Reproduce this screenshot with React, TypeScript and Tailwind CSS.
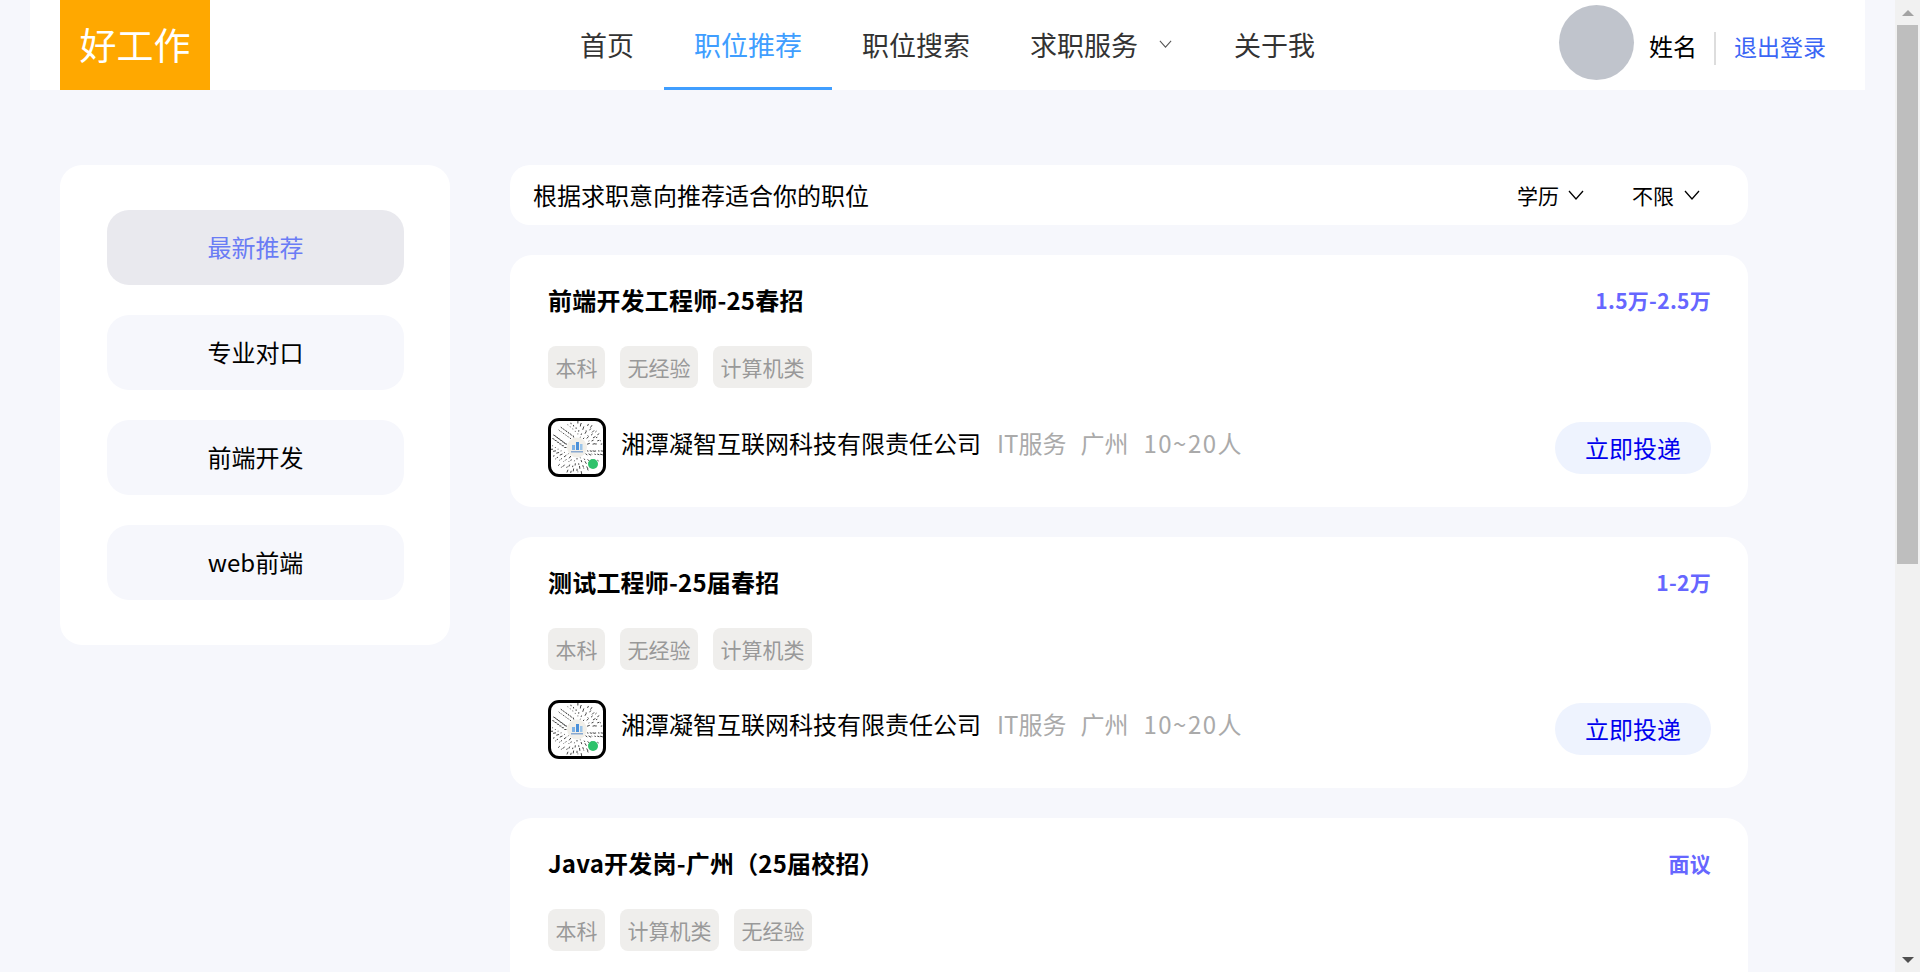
import React from 'react';

const font = { fontFamily: '"Noto Sans CJK SC", "Noto Sans", sans-serif' };

const jobs = [
  { title: '前端开发工程师-25春招', salary: '1.5万-2.5万', tags: ['本科', '无经验', '计算机类'] },
  { title: '测试工程师-25届春招', salary: '1-2万', tags: ['本科', '无经验', '计算机类'] },
  { title: 'Java开发岗-广州（25届校招）', salary: '面议', tags: ['本科', '计算机类', '无经验'] },
];

const sideItems = ['最新推荐', '专业对口', '前端开发', 'web前端'];

const Chevron: React.FC<{ className?: string }> = ({ className }) => (
  <svg viewBox="0 0 16 10" className={className} fill="none" stroke="currentColor" strokeWidth="1.3">
    <polyline points="1,1 8,9 15,1" />
  </svg>
);

// small mini-program style code, drawn with rings of dashes
const MiniCode: React.FC = () => {
  const marks: React.ReactNode[] = [];
  for (let ring = 0; ring < 6; ring++) {
    const r = 10.5 + ring * 2.7;
    const count = 20 + ring * 5;
    for (let i = 0; i < count; i++) {
      if ((i * 7 + ring * 3) % 3 === 0) continue;
      const a = (i / count) * Math.PI * 2;
      const len = 0.8 + ((i * 13 + ring) % 4) * 0.7;
      marks.push(
        <line
          key={`${ring}-${i}`}
          x1={26 + Math.cos(a) * r}
          y1={26.5 + Math.sin(a) * r}
          x2={26 + Math.cos(a) * (r + len)}
          y2={26.5 + Math.sin(a) * (r + len)}
          stroke="#444"
          strokeWidth="1"
        />
      );
    }
  }
  return (
    <div className="w-[58px] h-[59px] border-[3px] border-black rounded-[11px] bg-white overflow-hidden shrink-0">
      <svg viewBox="0 0 52 53" className="w-full h-full">
        {marks}
        <circle cx="26" cy="26.5" r="10" fill="#f1efe9" />
        <rect x="21" y="24" width="3" height="5" fill="#7fb2e5" />
        <rect x="25" y="21" width="3" height="8" fill="#4a90d9" />
        <rect x="29" y="23" width="2.5" height="6" fill="#9cc5ea" />
        <rect x="20" y="30" width="12" height="1.5" fill="#8aa9d0" />
        <circle cx="42" cy="43" r="5" fill="#2fc26b" />
      </svg>
    </div>
  );
};

const JobCard: React.FC<{ job: (typeof jobs)[number] }> = ({ job }) => (
  <div className="h-[251.5px] shrink-0 bg-white rounded-[22px] pl-[38px] pr-[37px] pt-[29px]">
    <div className="flex justify-between items-center h-[32px]">
      <h3 className="text-[24px] leading-[32px] font-bold text-black tracking-[0.2px]">{job.title}</h3>
      <span className="text-[21px] leading-[32px] font-bold text-[#6666ff] tracking-[0.3px]">{job.salary}</span>
    </div>
    <div className="flex gap-[15px] mt-[30px]">
      {job.tags.map((t) => (
        <span key={t} className="h-[42px] px-[7.5px] rounded-lg bg-[#efeeec] text-[#999] text-[21px] leading-[42px]">
          {t}
        </span>
      ))}
    </div>
    <div className="flex items-center mt-[30px]">
      <MiniCode />
      <div className="flex items-center gap-[15px] ml-[15px] text-[24px] leading-[32px] -translate-y-[5px]">
        <span className="text-black mr-[1px]">湘潭凝智互联网科技有限责任公司</span>
        <span className="text-[#aaa] -mr-[1px]">IT服务</span>
        <span className="text-[#aaa]">广州</span>
        <span className="text-[#aaa] tracking-[1.5px]">10~20人</span>
      </div>
      <button className="ml-auto w-[156px] h-[52px] rounded-[26px] bg-[#eef3fe] text-[#0000ee] text-[24px]">立即投递</button>
    </div>
  </div>
);

const App: React.FC = () => {
  return (
    <div className="flex h-[972px] overflow-hidden bg-[#f6f7fc]" style={font}>
      <div className="flex-1 min-w-0">
        {/* Header */}
        <header className="mx-[30px] h-[90px] bg-white flex pl-[30px] pr-[39px]">
          <div className="w-[150px] h-[90px] bg-[#ffa800] text-white text-[37px] leading-[88px] text-center">好工作</div>
          <nav className="flex ml-[340px] text-[27px] text-[#333]">
            <a className="px-[30px] leading-[90px]">首页</a>
            <a className="px-[30px] leading-[90px] text-[#409eff] border-b-[3px] border-[#409eff]">职位推荐</a>
            <a className="px-[30px] leading-[90px]">职位搜索</a>
            <a className="pl-[30px] pr-[30px] leading-[90px] flex items-center">
              求职服务
              <Chevron className="w-[13px] h-[8px] ml-[21px] -mt-[2px] text-[#555]" />
            </a>
            <a className="px-[30px] ml-[2px] leading-[90px]">关于我</a>
          </nav>
          <div className="ml-auto flex items-center">
            <div className="w-[75px] h-[75px] rounded-full bg-[#c0c4cc] mt-[-5px]" />
            <span className="ml-[15px] text-[24px] leading-[32px] text-black mt-[2px]">姓名</span>
            <span className="ml-[17px] w-[2px] h-[33px] bg-[#dddddd] mt-[7px]" />
            <a className="ml-[18px] text-[23px] leading-[32px] text-[#3b66f5] mt-[1px]">退出登录</a>
          </div>
        </header>

        {/* Body */}
        <div className="flex items-start gap-[60px] pl-[60px] pt-[75px]">
          <aside className="w-[390px] shrink-0 bg-white rounded-[22px] pl-[47px] pr-[46px] py-[45px] flex flex-col gap-[30px]">
            {sideItems.map((item, i) => (
              <div
                key={item}
                className={
                  i === 0
                    ? 'h-[75px] rounded-[22px] bg-[#e9e9ee] text-[#6a7cf5] text-[24px] leading-[74px] text-center'
                    : 'h-[75px] rounded-[22px] bg-[#f6f7fc] text-black text-[24px] leading-[74px] text-center'
                }
              >
                {item}
              </div>
            ))}
          </aside>

          <main className="w-[1238px] shrink-0 flex flex-col gap-[30px]">
            <div className="h-[60px] bg-white rounded-[20px] flex items-center pl-[23px] pr-[48px]">
              <span className="text-[24px] leading-[32px] text-black">根据求职意向推荐适合你的职位</span>
              <div className="ml-auto flex items-center text-[21px] leading-[32px] text-black">
                <span>学历</span>
                <Chevron className="w-[16px] h-[10px] ml-[9px]" />
                <span className="ml-[48px]">不限</span>
                <Chevron className="w-[16px] h-[10px] ml-[10px]" />
              </div>
            </div>
            {jobs.map((job) => (
              <JobCard key={job.title} job={job} />
            ))}
          </main>
        </div>
      </div>

      {/* Scrollbar */}
      <div className="w-[25px] shrink-0 bg-[#f1f1f1] flex flex-col items-center">
        <div className="h-[25px] flex items-center justify-center">
          <div className="w-0 h-0 border-x-[6px] border-x-transparent border-b-[6px] border-b-[#a3a3a3]" />
        </div>
        <div className="w-[21px] h-[539px] bg-[#bebebe]" />
        <div className="mt-auto h-[25px] flex items-center justify-center">
          <div className="w-0 h-0 border-x-[6px] border-x-transparent border-t-[6px] border-t-[#505050]" />
        </div>
      </div>
    </div>
  );
};

export default App;
